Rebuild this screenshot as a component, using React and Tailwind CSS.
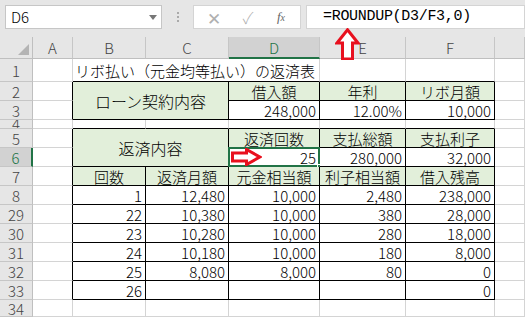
import React from "react";

const jp = "font-['Noto_Sans_CJK_JP','Noto_Sans',sans-serif]";

function Cell({ r = "g", b = "g", green, align = "right", span = "", big, children, overlay }) {
  const rc = r === "k" ? "border-r-black" : "border-r-[#d4d4d4]";
  const bc = b === "k" ? "border-b-black" : "border-b-[#d4d4d4]";
  const bg = green ? "bg-[#e2efda]" : "bg-white";
  const al = align === "center" ? "justify-center" : align === "left" ? "justify-start pl-[2px]" : "justify-end pr-[3px]";
  return (
    <div className={`relative flex items-center border-r border-b ${rc} ${bc} ${bg} ${al} ${span} ${big ? "text-[16px]" : "text-[15px]"} leading-none whitespace-nowrap`}>
      {children}
      {overlay}
    </div>
  );
}

function RowHead({ label, selected }) {
  return (
    <div
      className={`flex items-center justify-center overflow-hidden border-b border-[#c6c6c6] text-[15px] leading-none ${
        selected
          ? "bg-[#d2d2d2] text-[#217346] border-r-2 border-r-[#217346]"
          : "bg-[#e6e6e6] text-[#444] border-r border-r-[#bfbfbf]"
      }`}
    >
      {label}
    </div>
  );
}

function ColHead({ label, selected }) {
  return (
    <div
      className={`flex items-center justify-center border-r border-[#c6c6c6] text-[15px] leading-none ${
        selected
          ? "bg-[#d2d2d2] text-[#217346] border-b-2 border-b-[#217346]"
          : "bg-[#e6e6e6] text-[#444] border-b border-b-[#bfbfbf]"
      }`}
    >
      {label}
    </div>
  );
}

const data = [
  ["8", "1", "12,480", "10,000", "2,480", "238,000"],
  ["29", "22", "10,380", "10,000", "380", "28,000"],
  ["30", "23", "10,280", "10,000", "280", "18,000"],
  ["31", "24", "10,180", "10,000", "180", "8,000"],
  ["32", "25", "8,080", "8,000", "80", "0"],
  ["33", "26", "", "", "", "0"],
];

export default function App() {
  return (
    <div className={`relative w-[525px] h-[317px] overflow-hidden bg-white text-black font-light ${jp}`}>
      {/* formula bar */}
      <div className="h-[37px] bg-[#e6e6e6] flex items-start pt-[5px] pl-[5px]">
        <div className="w-[157px] h-[24px] bg-white border border-[#c6c6c6] flex items-center justify-between pl-[5px] pr-[4px] text-[15px]">
          <span>D6</span>
          <svg width="8" height="5" viewBox="0 0 8 5">
            <path d="M0 0H8L4 5Z" fill="#777" />
          </svg>
        </div>
        <div className="w-[31px] h-[24px] flex flex-col items-center justify-center gap-[2px]">
          <span className="w-[2px] h-[2px] bg-[#aaa]" />
          <span className="w-[2px] h-[2px] bg-[#aaa]" />
          <span className="w-[2px] h-[2px] bg-[#aaa]" />
        </div>
        <div className="w-[108px] h-[24px] bg-white border border-[#d4d4d4] flex items-center text-[#b0b0b0]">
          <span className="w-[40px] text-center text-[17px] leading-none">✕</span>
          <span className="w-[28px] text-center text-[16px] leading-none">✓</span>
          <span className="w-[38px] text-center text-[13px] italic font-['Liberation_Serif',serif] text-[#666]">
            f<span className="text-[10px]">x</span>
          </span>
        </div>
        <div className="ml-[5px] flex-1 h-[24px] bg-white border border-[#d4d4d4] flex items-center pl-[16px] text-[15px] font-normal font-['Liberation_Mono','Noto_Sans_CJK_JP',monospace] tracking-[-0.3px]">
          =ROUNDUP(D3/F3,0)
        </div>
      </div>

      {/* sheet grid */}
      <div className="grid h-[280px] grid-cols-[33px_40px_73px_83px_91px_86px_89px_1fr] grid-rows-[22px_23px_19px_19px_9px_19px_19px_19px_19px_19px_19px_19px_19px_19px_1fr]">
        {/* header row */}
        <div className="relative bg-[#e6e6e6] border-r border-b border-[#bfbfbf]">
          <svg className="absolute right-[3px] bottom-[3px]" width="11" height="11" viewBox="0 0 11 11">
            <path d="M11 0V11H0Z" fill="#b4b4b4" />
          </svg>
        </div>
        <ColHead label="A" />
        <ColHead label="B" />
        <ColHead label="C" />
        <ColHead label="D" selected />
        <ColHead label="E" />
        <ColHead label="F" />
        <ColHead label="" />

        {/* row 1 */}
        <RowHead label="1" />
        <Cell />
        <Cell b="k" align="left" span="col-span-3">
          <span className="text-[15px]">リボ払い（元金均等払い）の返済表</span>
        </Cell>
        <Cell b="k" />
        <Cell b="k" />
        <Cell />

        {/* row 2 */}
        <RowHead label="2" />
        <Cell r="k" />
        <Cell r="k" b="k" green align="center" span="col-span-2 row-span-2" big>
          ローン契約内容
        </Cell>
        <Cell r="k" b="k" green align="center">借入額</Cell>
        <Cell r="k" b="k" green align="center">年利</Cell>
        <Cell r="k" b="k" green align="center">リボ月額</Cell>
        <Cell />

        {/* row 3 */}
        <RowHead label="3" />
        <Cell r="k" />
        <Cell r="k" b="k">248,000</Cell>
        <Cell r="k" b="k">12.00%</Cell>
        <Cell r="k" b="k">10,000</Cell>
        <Cell />

        {/* row 4, squeezed so the number is clipped */}
        <div className="bg-[#e6e6e6] border-r border-r-[#bfbfbf] border-b border-[#c6c6c6] overflow-hidden flex items-start justify-center">
          <span className="text-[15px] leading-[8px] text-[#444]">4</span>
        </div>
        <Cell />
        <Cell b="k" />
        <Cell b="k" />
        <Cell b="k" />
        <Cell b="k" />
        <Cell b="k" />
        <Cell />

        {/* row 5 */}
        <RowHead label="5" />
        <Cell r="k" />
        <Cell r="k" b="k" green align="center" span="col-span-2 row-span-2" big>
          返済内容
        </Cell>
        <Cell r="k" b="k" green align="center">返済回数</Cell>
        <Cell r="k" b="k" green align="center">支払総額</Cell>
        <Cell r="k" b="k" green align="center">支払利子</Cell>
        <Cell />

        {/* row 6 */}
        <RowHead label="6" selected />
        <Cell r="k" />
        <Cell
          r="k"
          b="k"
          overlay={
            <>
              <div className="absolute -left-px -top-px -right-px -bottom-px border-2 border-[#217346] pointer-events-none" />
              <div className="absolute -right-[4px] -bottom-[4px] w-[6px] h-[6px] bg-[#217346] border border-white" />
              <svg className="absolute left-[2px] top-0" width="31" height="18" viewBox="0 0 31 18">
                <path d="M1.5 5H15.5V1.5L29 9L15.5 16.5V13H1.5Z" fill="white" stroke="#e8101e" strokeWidth="3" strokeLinejoin="miter" />
              </svg>
            </>
          }
        >
          25
        </Cell>
        <Cell r="k" b="k">280,000</Cell>
        <Cell r="k" b="k">32,000</Cell>
        <Cell />

        {/* row 7 */}
        <RowHead label="7" />
        <Cell r="k" />
        <Cell r="k" b="k" green align="center">回数</Cell>
        <Cell r="k" b="k" green align="center">返済月額</Cell>
        <Cell r="k" b="k" green align="center">元金相当額</Cell>
        <Cell r="k" b="k" green align="center">利子相当額</Cell>
        <Cell r="k" b="k" green align="center">借入残高</Cell>
        <Cell />

        {data.map((row) => (
          <React.Fragment key={row[0]}>
            <RowHead label={row[0]} />
            <Cell r="k" />
            {row.slice(1).map((v, i) => (
              <Cell key={i} r="k" b="k">
                {v}
              </Cell>
            ))}
            <Cell />
          </React.Fragment>
        ))}

        {/* row 34 */}
        <RowHead label="34" />
        <Cell />
        <Cell />
        <Cell />
        <Cell />
        <Cell />
        <Cell />
        <Cell />
      </div>

      {/* up arrow pointing at the formula */}
      <svg className="absolute left-[335px] top-[28px]" width="25" height="32" viewBox="0 0 25 32">
        <path d="M12.5 1.8L23 15H17.5V31H7.5V15H2Z" fill="white" stroke="#e8101e" strokeWidth="3" />
      </svg>
    </div>
  );
}
